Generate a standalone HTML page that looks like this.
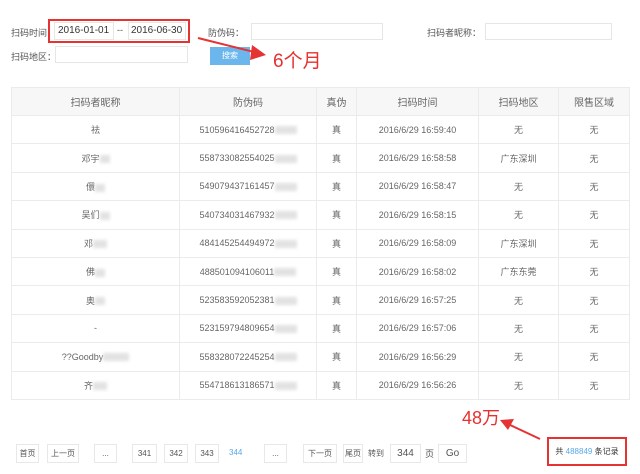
<!DOCTYPE html><html><head><meta charset="utf-8"><style>
*{box-sizing:border-box;margin:0;padding:0}
body{width:640px;height:474px;background:#fff;font-family:"Liberation Sans","Noto Sans CJK SC",sans-serif;font-size:9px;color:#555;position:relative;overflow:hidden}
.a{position:absolute}
.inp{position:absolute;border:1px solid #e6e6e6;background:#fff;height:17px}
table{position:absolute;left:11px;top:87px;width:619px;border-collapse:collapse}
td,th{border:1px solid #ebebeb;text-align:center;font-weight:normal;height:28.4px;font-size:9px;color:#666}
th{background:#f7f7f7;height:28px;font-size:10px;color:#666}
.b{display:inline-block;width:22px;height:8px;background:#e2e2e2;filter:blur(1.5px);vertical-align:middle}
.pg{position:absolute;top:444px;height:19px;border:1px solid #e8e8e8;line-height:17px;text-align:center;font-size:8px;color:#555}
.red{color:#e8302f}
</style></head><body>
<div class="a" style="left:11px;top:26px">扫码时间：</div>
<div class="a" style="left:48px;top:19px;width:142px;height:24px;border:2px solid #e53333"></div>
<div class="inp" style="left:54px;top:22px;width:60px;height:18px"></div>
<div class="a" style="left:58px;top:25px;font-size:10px;color:#333">2016-01-01</div>
<div class="a" style="left:117px;top:25px;font-size:9px">--</div>
<div class="inp" style="left:128px;top:22px;width:58px;height:18px"></div>
<div class="a" style="left:131px;top:25px;font-size:10px;color:#333">2016-06-30</div>
<div class="a" style="left:208px;top:26px">防伪码：</div>
<div class="inp" style="left:251px;top:23px;width:132px"></div>
<div class="a" style="left:427px;top:26px">扫码者昵称：</div>
<div class="inp" style="left:485px;top:23px;width:127px"></div>
<div class="a" style="left:11px;top:50px">扫码地区：</div>
<div class="inp" style="left:55px;top:46px;width:133px"></div>
<div class="a" style="left:210px;top:47px;width:40px;height:18px;background:#6cb6ee;color:#fff;font-size:8px;text-align:center;line-height:18px">搜索</div>
<svg class="a" style="left:0;top:0" width="640" height="474"><line x1="198" y1="38" x2="258" y2="53" stroke="#e53333" stroke-width="2"/><polygon points="266,55 252,45 250,60" fill="#e53333"/>
<line x1="540" y1="439" x2="508" y2="424" stroke="#e53333" stroke-width="2"/><polygon points="500,420 514,419 508,430" fill="#e53333"/></svg>
<div class="a red" style="left:273px;top:46px;font-size:19px">6个月</div>
<table>
<tr><th style="width:168px">扫码者昵称</th><th style="width:137px">防伪码</th><th style="width:40px">真伪</th><th style="width:122px">扫码时间</th><th style="width:80px">扫码地区</th><th>限售区域</th></tr>
<tr><td>祛</td><td>510596416452728<span class="b"></span></td><td>真</td><td>2016/6/29 16:59:40</td><td>无</td><td>无</td></tr>
<tr><td>邓宇<span class="b" style="width:10px"></span></td><td>558733082554025<span class="b"></span></td><td>真</td><td>2016/6/29 16:58:58</td><td>广东深圳</td><td>无</td></tr>
<tr><td>儇<span class="b" style="width:10px"></span></td><td>549079437161457<span class="b"></span></td><td>真</td><td>2016/6/29 16:58:47</td><td>无</td><td>无</td></tr>
<tr><td>吴们<span class="b" style="width:10px"></span></td><td>540734031467932<span class="b"></span></td><td>真</td><td>2016/6/29 16:58:15</td><td>无</td><td>无</td></tr>
<tr><td>邓<span class="b" style="width:14px"></span></td><td>484145254494972<span class="b"></span></td><td>真</td><td>2016/6/29 16:58:09</td><td>广东深圳</td><td>无</td></tr>
<tr><td>佛<span class="b" style="width:10px"></span></td><td>488501094106011<span class="b"></span></td><td>真</td><td>2016/6/29 16:58:02</td><td>广东东莞</td><td>无</td></tr>
<tr><td>奥<span class="b" style="width:10px"></span></td><td>523583592052381<span class="b"></span></td><td>真</td><td>2016/6/29 16:57:25</td><td>无</td><td>无</td></tr>
<tr><td>-</td><td>523159794809654<span class="b"></span></td><td>真</td><td>2016/6/29 16:57:06</td><td>无</td><td>无</td></tr>
<tr><td>??Goodby<span class="b" style="width:26px"></span></td><td>558328072245254<span class="b"></span></td><td>真</td><td>2016/6/29 16:56:29</td><td>无</td><td>无</td></tr>
<tr><td>齐<span class="b" style="width:14px"></span></td><td>554718613186571<span class="b"></span></td><td>真</td><td>2016/6/29 16:56:26</td><td>无</td><td>无</td></tr>
</table>
<div class="a red" style="left:462px;top:404px;font-size:18px">48万</div>
<div class="pg" style="left:16px;width:23px">首页</div>
<div class="pg" style="left:47px;width:32px">上一页</div>
<div class="pg" style="left:94px;width:23px">...</div>
<div class="pg" style="left:132px;width:25px">341</div>
<div class="pg" style="left:164px;width:24px">342</div>
<div class="pg" style="left:195px;width:24px">343</div>
<div class="a" style="left:229px;top:448px;font-size:8px;color:#5aa8e8">344</div>
<div class="pg" style="left:264px;width:23px">...</div>
<div class="pg" style="left:303px;width:34px">下一页</div>
<div class="pg" style="left:343px;width:20px">尾页</div>
<div class="a" style="left:368px;top:448px;font-size:8px">转到</div>
<div class="pg" style="left:390px;width:31px;font-size:10px">344</div>
<div class="a" style="left:425px;top:447px;font-size:9px">页</div>
<div class="pg" style="left:438px;width:29px;font-size:10px">Go</div>
<div class="a" style="left:547px;top:437px;width:80px;height:29px;border:2px solid #e53333;font-size:8px;line-height:25px;text-align:center;color:#333">共 <span style="color:#5aa8e8">488849</span> 条记录</div>
</body></html>
